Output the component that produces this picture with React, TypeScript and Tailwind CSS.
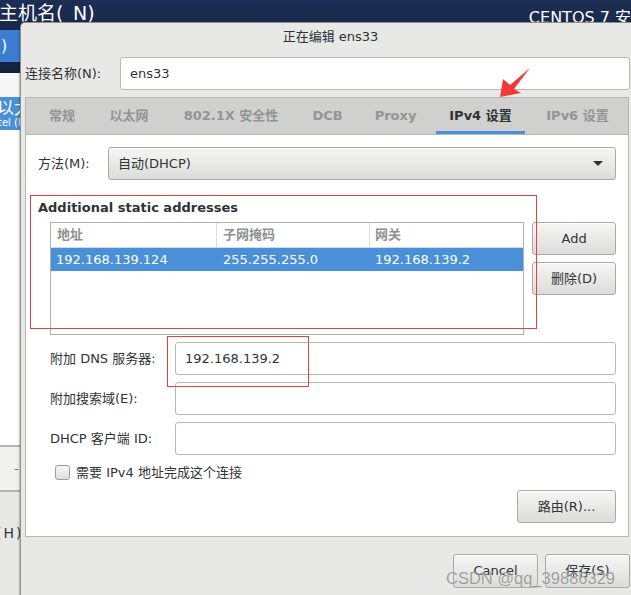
const tabs = [
  { label: '常规', w: 'w-[60px]' },
  { label: '以太网', w: 'w-[74px]' },
  { label: '802.1X 安全性', w: 'w-[130px]' },
  { label: 'DCB', w: 'w-[63px]' },
  { label: 'Proxy', w: 'w-[73px]' },
  { label: 'IPv4 设置', w: 'w-[97px]' },
  { label: 'IPv6 设置', w: 'w-[97px]' },
];

function GtkButton({ label, className }: { label: string; className: string }) {
  return (
    <button className={`flex items-center justify-center rounded-[3px] border border-[#a9a9a6] bg-gradient-to-b from-[#f6f6f5] to-[#dcdcda] text-[#2e3436] shadow-[inset_0_1px_0_white] ${className}`}>
      {label}
    </button>
  );
}

function Entry({ value }: { value?: string }) {
  return (
    <div className="flex h-[33px] flex-1 items-center rounded-[3px] border border-[#b8b8b5] bg-white px-[9px] text-[#2e3436]">
      {value}
    </div>
  );
}

export default function App() {
  return (
    <div className="relative h-[595px] w-[631px] overflow-hidden bg-[#e8e8e7] font-['DejaVu_Sans','Noto_Sans_CJK_SC',sans-serif] text-[13px] text-[#2e3436]">
      {/* installer behind the dialog */}
      <div className="flex h-full flex-col">
        <header className="flex h-[73px] flex-col bg-gradient-to-b from-[#1c2e54] to-[#14213e]">
          <div className="flex h-[30px] items-start justify-between overflow-hidden text-white">
            <span className="-ml-[1px] pt-[2px] text-[19px] leading-[22px]">主机名(_N)</span>
            <span className="-mr-[16px] pt-[9px] text-[16px] leading-[18px]">CENTOS 7 安装</span>
          </div>
          <div className="flex h-[32px] w-[20px] items-center overflow-hidden bg-[#3c7cd3] pl-[1px] text-[16px] text-white">)</div>
        </header>
        <div className="flex w-[20px] flex-1 flex-col overflow-hidden">
          <div className="h-[24px] bg-[#f7f7f7]" />
          <div className="flex h-[33px] flex-col justify-center bg-[#4a8fd9] text-white">
            <span className="-ml-[3px] whitespace-nowrap text-[17px] leading-[18px]">以太网</span>
            <span className="-ml-[2px] whitespace-nowrap text-[10px] leading-[12px]">tel (R)</span>
          </div>
          <div className="h-[315px] bg-white" />
          <div className="flex h-[47px] items-center justify-end border-y-2 border-[#b3b3b1] bg-[#f1f1f0] pr-[1px] text-[#6a6a6a]">-</div>
          <div className="flex flex-1 items-start bg-[#e8e8e7] pt-[31px]">
            <span className="-ml-[4px] text-[14px] tracking-[2px] text-[#3a3a3a]">(H)</span>
          </div>
        </div>
      </div>

      {/* dialog window */}
      <div className="absolute left-[20px] top-[22px] flex h-[600px] w-[620px] flex-col rounded-tl-[5px] border-l border-t border-[#8f8f8c] bg-[#e8e8e7] shadow-[-1px_0_2px_rgba(0,0,0,0.25)]">
        <div className="flex h-[28px] items-center justify-center text-[#2e3436]">正在编辑 ens33</div>

        <div className="ml-[4px] flex w-[605px] flex-col">
          <div className="mt-[6px] flex h-[33px] items-center">
            <span className="w-[95px]">连接名称(N):</span>
            <Entry value="ens33" />
          </div>

          <div className="mt-[7px] flex w-[604px] flex-col border border-[#b6b6b3]">
            <nav className="flex h-[37px] items-stretch border-b border-[#b6b6b3] bg-[#d0d0cf] pl-[6px] font-bold">
              {tabs.map((t) => (
                <div key={t.label} className={`flex ${t.w} justify-center`}>
                  <div
                    className={`flex flex-1 items-center justify-center whitespace-nowrap border-b-[3px] mx-[4px] pt-[2px] ${
                      t.label === 'IPv4 设置' ? 'border-[#4a90d9] text-[#2e3436]' : 'border-transparent text-[#929595]'
                    }`}
                  >
                    {t.label}
                  </div>
                </div>
              ))}
            </nav>

            <section className="flex h-[401px] flex-col bg-white px-[12px] pt-[12px]">
              <div className="flex h-[33px] items-center">
                <span className="w-[70px]">方法(M):</span>
                <div className="flex h-[33px] flex-1 items-center justify-between rounded-[3px] border border-[#a9a9a6] bg-gradient-to-b from-[#f6f6f5] to-[#dcdcda] pl-[9px] pr-[12px] shadow-[inset_0_1px_0_white]">
                  <span>自动(DHCP)</span>
                  <svg width="10" height="6" viewBox="0 0 10 6">
                    <polygon points="0,0 10,0 5,5" fill="#2e3436" />
                  </svg>
                </div>
              </div>

              <h3 className="mt-[19px] h-[18px] font-bold leading-[18px]">Additional static addresses</h3>

              <div className="mt-[5px] flex gap-[8px] pl-[12px]">
                <div className="flex h-[113px] w-[475px] flex-col border border-[#b0b0ae] bg-white">
                  <div className="flex h-[25px] border-b border-[#d8d8d6] font-bold text-[#8e9191]">
                    <span className="flex w-[166px] items-center border-r border-[#dcdcda] px-[6px]">地址</span>
                    <span className="flex w-[153px] items-center border-r border-[#dcdcda] px-[6px]">子网掩码</span>
                    <span className="flex flex-1 items-center px-[5px]">网关</span>
                  </div>
                  <div className="flex h-[23px] items-center bg-[#4a90d9] text-white">
                    <span className="w-[166px] px-[5px]">192.168.139.124</span>
                    <span className="w-[153px] px-[6px]">255.255.255.0</span>
                    <span className="flex-1 px-[5px]">192.168.139.2</span>
                  </div>
                </div>
                <div className="flex w-[84px] flex-col gap-[7px]">
                  <GtkButton label="Add" className="h-[33px] w-full" />
                  <GtkButton label="删除(D)" className="h-[33px] w-full" />
                </div>
              </div>

              <div className="mt-[7px] flex flex-col gap-[7px]">
                <div className="flex items-center">
                  <span className="w-[137px] pl-[12px]">附加 DNS 服务器:</span>
                  <Entry value="192.168.139.2" />
                </div>
                <div className="flex items-center">
                  <span className="w-[137px] pl-[12px]">附加搜索域(E):</span>
                  <Entry />
                </div>
                <div className="flex items-center">
                  <span className="w-[137px] pl-[12px]">DHCP 客户端 ID:</span>
                  <Entry />
                </div>
              </div>

              <label className="ml-[17px] mt-[10px] flex h-[15px] items-center gap-[6px]">
                <span className="h-[15px] w-[15px] rounded-[3px] border border-[#9d9d9b] bg-gradient-to-b from-[#f7f7f7] to-[#dededc]" />
                <span>需要 IPv4 地址完成这个连接</span>
              </label>

              <GtkButton label="路由(R)..." className="mt-[10px] h-[33px] w-[99px] self-end" />
            </section>
          </div>

          <div className="mt-[17px] flex justify-end gap-[7px]">
            <GtkButton label="Cancel" className="h-[34px] w-[85px]" />
            <GtkButton label="保存(S)" className="h-[34px] w-[85px]" />
          </div>
        </div>
      </div>

      {/* annotations drawn over the screenshot */}
      <div className="pointer-events-none absolute left-[30px] top-[195px] h-[134px] w-[507px] border border-[#e8403f]" />
      <div className="pointer-events-none absolute left-[167px] top-[336px] h-[51px] w-[142px] border border-[#e8403f]" />
      <svg className="pointer-events-none absolute left-[495px] top-[64px]" width="40" height="38" viewBox="495 64 40 38">
        <polygon points="500,97 503,79 510,85 530,68 514,89 521,93" fill="#f03a3a" />
      </svg>
      <span className="pointer-events-none absolute left-[446px] top-[566px] font-['Liberation_Sans',sans-serif] text-[16.5px] text-[rgba(95,95,95,0.6)] [text-shadow:0_0_1px_rgba(255,255,255,0.8)]">
        CSDN @qq_39886329
      </span>
    </div>
  );
}
